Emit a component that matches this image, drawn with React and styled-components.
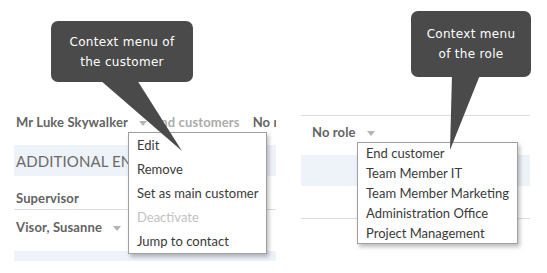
import React from "react"
import styled, { createGlobalStyle } from "styled-components"

const GlobalStyle = createGlobalStyle`
  body {
    margin: 0;
    background: #fff;
    font-family: Lato, "Open Sans", sans-serif;
  }
`

const Page = styled.div`
  position: relative;
  width: 547px;
  height: 273px;
  overflow: hidden;
  display: flex;
  align-items: flex-start;
`

const LeftPanel = styled.div`
  width: 262px;
  margin-left: 14px;
  margin-top: 110px;
  display: flex;
  flex-direction: column;
  overflow: hidden;
`

const RightPanel = styled.div`
  width: 229px;
  margin-left: 25px;
  margin-top: 115px;
  border-top: 1px solid #dcdcdc;
  display: flex;
  flex-direction: column;
`

const Row = styled.div`
  display: flex;
  align-items: center;
  height: ${(p) => p.h || 24}px;
  padding-left: ${(p) => p.pad || 2}px;
  white-space: nowrap;
  border-bottom: ${(p) => (p.line ? "1px solid #dcdcdc" : "none")};
  margin-top: ${(p) => p.mt || 0}px;
`

const Label = styled.span`
  font-size: 13px;
  font-weight: 700;
  letter-spacing: 0.12px;
  color: ${(p) => (p.muted ? "#acacac" : "#636363")};
  margin-right: ${(p) => p.mr || 0}px;
`

const Caret = styled.span`
  display: inline-block;
  width: 0;
  height: 0;
  border-left: 4px solid transparent;
  border-right: 4px solid transparent;
  border-top: 5px solid #b4b4b4;
  margin-left: 11px;
  margin-right: ${(p) => p.mr || 0}px;
  margin-top: 2px;
`

const Band = styled.div`
  height: ${(p) => p.h}px;
  margin-top: ${(p) => p.mt || 0}px;
  background: #eef2f9;
  display: flex;
  align-items: center;
  padding-left: 2px;
`

const SectionTitle = styled.span`
  font-size: 15px;
  color: #6a6a6a;
  letter-spacing: 0.1px;
  white-space: nowrap;
`

const Rule = styled.div`
  height: 1px;
  background: #dcdcdc;
  margin-top: ${(p) => p.mt}px;
`

const Menu = styled.ul`
  position: absolute;
  left: ${(p) => p.x}px;
  top: ${(p) => p.y}px;
  width: ${(p) => p.w}px;
  margin: 0;
  padding: 0 0 0 8px;
  list-style: none;
  background: #fff;
  border: 1px solid #a0a0a0;
  box-shadow: 2px 3px 4px rgba(0, 0, 0, 0.25);
  box-sizing: border-box;
`

const MenuItem = styled.li`
  height: ${(p) => p.h}px;
  line-height: ${(p) => p.h}px;
  font-size: 13px;
  color: ${(p) => (p.disabled ? "#c2c2c2" : "#3a3a3a")};
  white-space: nowrap;
`

const Bubble = styled.div`
  position: absolute;
  left: ${(p) => p.x}px;
  top: ${(p) => p.y}px;
  width: ${(p) => p.w}px;
  height: ${(p) => p.h}px;
  background: #4a4a4a;
  border-radius: 7px;
  display: flex;
  flex-direction: column;
  align-items: center;
  justify-content: center;
  color: #fff;
  font-family: "DejaVu Sans", Verdana, sans-serif;
  font-size: 12px;
  line-height: 20px;
  letter-spacing: 0.3px;
  z-index: 3;
`

const Tail = styled.svg`
  position: absolute;
  left: 0;
  top: 0;
  width: 547px;
  height: 273px;
  pointer-events: none;
  z-index: 3;
`

const customerMenu = ["Edit", "Remove", "Set as main customer", "Deactivate", "Jump to contact"]
const roleMenu = ["End customer", "Team Member IT", "Team Member Marketing", "Administration Office", "Project Management"]

function App() {
  return (
    <Page>
      <GlobalStyle />
      <LeftPanel>
        <Row>
          <Label>Mr Luke Skywalker</Label>
          <Caret mr={6} />
          <Label muted mr={13}>End customers</Label>
          <Label>No role</Label>
        </Row>
        <Band h={31} mt={11}>
          <SectionTitle>ADDITIONAL ENGAGEMENTS</SectionTitle>
        </Band>
        <Row h={22} mt={11} line>
          <Label>Supervisor</Label>
        </Row>
        <Row h={24} mt={5}>
          <Label>Visor, Susanne</Label>
          <Caret />
        </Row>
        <Band h={10} mt={12} />
      </LeftPanel>

      <RightPanel>
        <Row h={32} pad={11}>
          <Label>No role</Label>
          <Caret />
        </Row>
        <Band h={31} mt={7} />
        <Rule mt={32} />
      </RightPanel>

      <Menu x={128} y={132} w={139}>
        {customerMenu.map((item) => (
          <MenuItem key={item} h={24} disabled={item === "Deactivate"}>
            {item}
          </MenuItem>
        ))}
      </Menu>

      <Menu x={357} y={142} w={161}>
        {roleMenu.map((item) => (
          <MenuItem key={item} h={20}>
            {item}
          </MenuItem>
        ))}
      </Menu>

      <Bubble x={51} y={21} w={142} h={61}>
        <span>Context menu of</span>
        <span>the customer</span>
      </Bubble>
      <Bubble x={411} y={11} w={120} h={66}>
        <span>Context menu</span>
        <span>of the role</span>
      </Bubble>
      <Tail viewBox="0 0 547 273">
        <polygon points="100,80 137,80 182,151" fill="#4a4a4a" />
        <polygon points="452,75 480,75 450,150" fill="#4a4a4a" />
      </Tail>
    </Page>
  )
}

export default App
